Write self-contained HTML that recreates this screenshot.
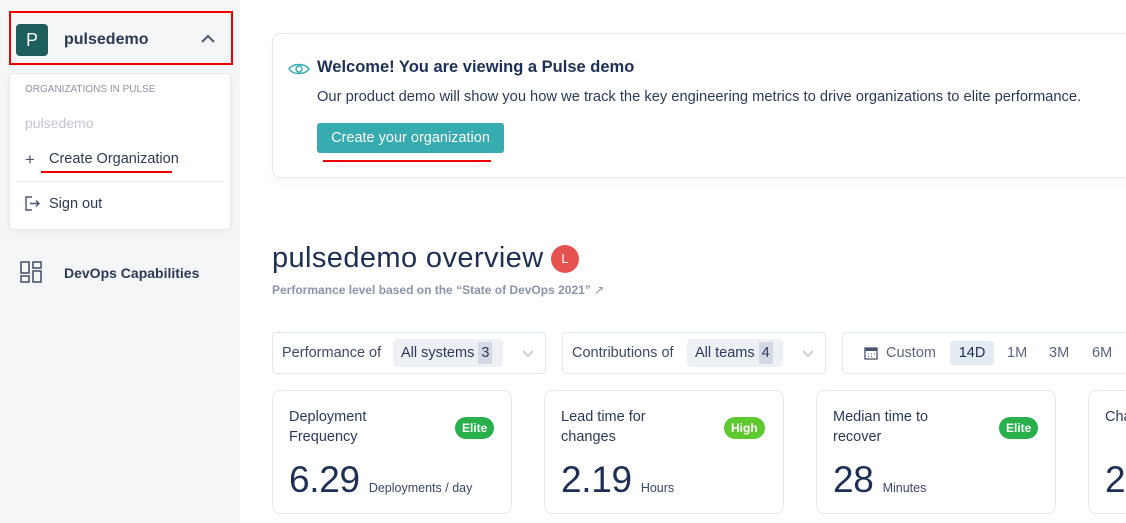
<!DOCTYPE html>
<html><head><meta charset="utf-8"><style>
*{box-sizing:border-box;margin:0;padding:0}
body{width:1126px;height:523px;overflow:hidden;background:#fff;font-family:"Liberation Sans",sans-serif;color:#2b3a5a;position:relative}
#w{position:absolute;left:0;top:0;width:1126px;height:523px;overflow:hidden}
.a{position:absolute}
.side{left:0;top:0;width:240px;height:523px;background:#f5f6f8}
.card{border:1px solid #e3e8f0;border-radius:8px;background:#fff;overflow:hidden}
.badge{position:absolute;top:26px;height:22px;border-radius:11px;color:#fff;font-weight:bold;font-size:12px;line-height:22px;padding:0 7px}
.ct{position:absolute;left:16px;top:16px;font-size:14.5px;line-height:20px;color:#2b3a5a;white-space:nowrap}
.big{position:absolute;left:16px;top:68px;font-size:37px;color:#1e2f55;letter-spacing:-0.3px}
.unit{font-size:12.5px;letter-spacing:0;color:#3a4766;margin-left:9px}
.f{position:absolute;top:332px;height:42px;border:1px solid #e3e8f0;border-radius:4px;font-size:14.5px;color:#3d4a66;overflow:hidden}
.chip{position:absolute;top:6px;height:28px;background:#edf1f6;border-radius:4px;line-height:28px;padding-left:8px;color:#2b3a5a}
.num{display:inline-block;background:#d3dae4;padding:0 3px;margin-left:4px;line-height:22px}
</style></head><body><div id="w">
<div class="a side"></div>
<div class="a" style="left:9px;top:11px;width:224px;height:54px;border:2px solid #e00"></div>
<div class="a" style="left:16px;top:24px;width:32px;height:32px;background:#1d5e5f;border-radius:4px;color:#fff;font-size:18px;line-height:32px;text-align:center">P</div>
<div class="a" style="left:64px;top:31px;font-size:16px;font-weight:bold;color:#2d3a55">pulsedemo</div>
<svg class="a" style="left:200px;top:33px" width="16" height="12"><path d="M2 9 L8 3 L14 9" fill="none" stroke="#4a5570" stroke-width="2"/></svg>
<div class="a" style="left:9px;top:73px;width:222px;height:157px;background:#fff;border:1px solid #e6e9ef;border-radius:4px;box-shadow:0 4px 10px rgba(0,0,0,.04)"></div>
<div class="a" style="left:25px;top:84px;font-size:10px;color:#8a94a8">ORGANIZATIONS IN PULSE</div>
<div class="a" style="left:25px;top:115px;font-size:14px;color:#c0c6d2">pulsedemo</div>
<div class="a" style="left:25px;top:150px;font-size:17px;color:#4a5570">+</div>
<div class="a" style="left:49px;top:151px;font-size:14.5px;color:#2d3a55">Create Organization</div>
<div class="a" style="left:41px;top:171px;width:131px;height:2px;background:#e00"></div>
<div class="a" style="left:17px;top:181px;width:206px;height:1px;background:#e6e9ef"></div>
<svg class="a" style="left:24px;top:196px" width="17" height="15"><path d="M8 1H2v13h6M6 7.5h9M12 4.5l3 3-3 3" fill="none" stroke="#4a5570" stroke-width="1.4"/></svg>
<div class="a" style="left:49px;top:196px;font-size:14.5px;color:#2d3a55">Sign out</div>
<svg class="a" style="left:20px;top:261px" width="22" height="22"><g fill="none" stroke="#4a5570" stroke-width="1.6"><rect x="1" y="1" width="8" height="11"/><rect x="1" y="15" width="8" height="6"/><rect x="13" y="1" width="8" height="6"/><rect x="13" y="10" width="8" height="11"/></g></svg>
<div class="a" style="left:64px;top:265px;font-size:14px;font-weight:bold;color:#2d3a55">DevOps Capabilities</div>

<div class="a card" style="left:272px;top:33px;width:880px;height:145px;box-shadow:0 4px 12px rgba(0,0,0,.03)"></div>
<svg class="a" style="left:288px;top:61px" width="22" height="16"><path d="M1 8C5 2 17 2 21 8C17 14 5 14 1 8Z" fill="none" stroke="#36acb0" stroke-width="1.5"/><circle cx="11" cy="8" r="3" fill="none" stroke="#36acb0" stroke-width="1.5"/></svg>
<div class="a" style="left:317px;top:58px;font-size:16.5px;font-weight:bold;color:#1e2f55">Welcome! You are viewing a Pulse demo</div>
<div class="a" style="left:317px;top:89px;font-size:14.7px;color:#2b3a5a;white-space:nowrap">Our product demo will show you how we track the key engineering metrics to drive organizations to elite performance.</div>
<div class="a" style="left:317px;top:123px;width:187px;height:30px;background:#36acb0;border-radius:3px;color:#fff;font-size:14.5px;line-height:30px;text-align:center">Create your organization</div>
<div class="a" style="left:323px;top:160px;width:168px;height:2px;background:#e00"></div>

<div class="a" style="left:272px;top:242px;font-size:29px;color:#1e2f55;letter-spacing:0.4px">pulsedemo overview</div>
<div class="a" style="left:551px;top:245px;width:28px;height:28px;border-radius:50%;background:#e5524f;color:#fff;font-size:13px;line-height:28px;text-align:center">L</div>
<div class="a" style="left:272px;top:283px;font-size:12px;font-weight:bold;color:#8a94aa">Performance level based on the “State of DevOps 2021” <span style="font-weight:normal">↗</span></div>

<div class="f" style="left:272px;width:274px"><span class="a" style="left:9px;top:12px">Performance of</span><div class="chip" style="left:120px;width:110px">All systems<span class="num">3</span></div><svg class="a" style="left:248px;top:16px" width="14" height="10"><path d="M2 2l5 5 5-5" fill="none" stroke="#c4cad6" stroke-width="1.6"/></svg></div>
<div class="f" style="left:562px;width:264px"><span class="a" style="left:9px;top:12px">Contributions of</span><div class="chip" style="left:124px;width:96px">All teams<span class="num">4</span></div><svg class="a" style="left:238px;top:16px" width="14" height="10"><path d="M2 2l5 5 5-5" fill="none" stroke="#c4cad6" stroke-width="1.6"/></svg></div>
<div class="f" style="left:842px;width:320px">
<svg class="a" style="left:21px;top:13px" width="14" height="14"><rect x="1" y="2" width="12" height="11" fill="none" stroke="#4a5570" stroke-width="1.3"/><rect x="1" y="2" width="12" height="3" fill="#4a5570"/><path d="M4 8h1M7 8h1M10 8h1M4 10.5h1M7 10.5h1" stroke="#4a5570"/></svg>
<span class="a" style="left:43px;top:12px;color:#5a6680">Custom</span>
<div class="a" style="left:107px;top:8px;width:44px;height:24px;background:#e5ebf3;border-radius:3px;text-align:center;line-height:24px;color:#1e2f55">14D</div>
<span class="a" style="left:164px;top:12px;color:#5a6680">1M</span>
<span class="a" style="left:206px;top:12px;color:#5a6680">3M</span>
<span class="a" style="left:249px;top:12px;color:#5a6680">6M</span>
</div>

<div class="a card" style="left:272px;top:390px;width:240px;height:124px"><div class="ct">Deployment<br>Frequency</div><div class="badge" style="left:182px;background:#27b04b">Elite</div><div class="big">6.29<span class="unit">Deployments / day</span></div></div>
<div class="a card" style="left:544px;top:390px;width:240px;height:124px"><div class="ct">Lead time for<br>changes</div><div class="badge" style="left:179px;background:#5ec92e">High</div><div class="big">2.19<span class="unit">Hours</span></div></div>
<div class="a card" style="left:816px;top:390px;width:240px;height:124px"><div class="ct">Median time to<br>recover</div><div class="badge" style="left:182px;background:#27b04b">Elite</div><div class="big">28<span class="unit">Minutes</span></div></div>
<div class="a card" style="left:1088px;top:390px;width:240px;height:124px"><div class="ct">Change failure rate</div><div class="big">2</div></div>
</div></body></html>
